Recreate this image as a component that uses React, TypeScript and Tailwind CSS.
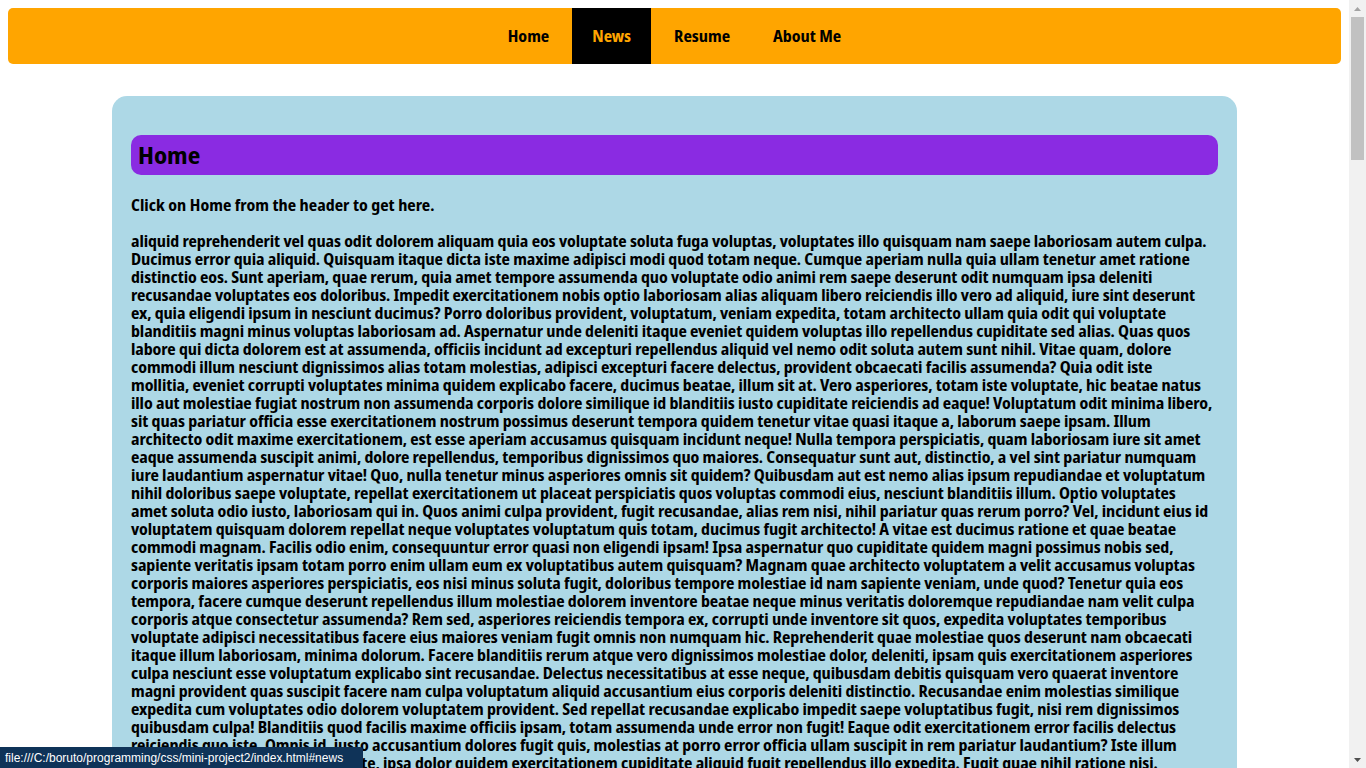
import React from 'react'

const font = { fontFamily: '"Noto Sans Display", "Noto Sans", sans-serif', fontStretch: 'condensed' }

// line breaks kept as they fall in the original page
const lines = [
  'aliquid reprehenderit vel quas odit dolorem aliquam quia eos voluptate soluta fuga voluptas, voluptates illo quisquam nam saepe laboriosam autem culpa.',
  'Ducimus error quia aliquid. Quisquam itaque dicta iste maxime adipisci modi quod totam neque. Cumque aperiam nulla quia ullam tenetur amet ratione',
  'distinctio eos. Sunt aperiam, quae rerum, quia amet tempore assumenda quo voluptate odio animi rem saepe deserunt odit numquam ipsa deleniti',
  'recusandae voluptates eos doloribus. Impedit exercitationem nobis optio laboriosam alias aliquam libero reiciendis illo vero ad aliquid, iure sint deserunt',
  'ex, quia eligendi ipsum in nesciunt ducimus? Porro doloribus provident, voluptatum, veniam expedita, totam architecto ullam quia odit qui voluptate',
  'blanditiis magni minus voluptas laboriosam ad. Aspernatur unde deleniti itaque eveniet quidem voluptas illo repellendus cupiditate sed alias. Quas quos',
  'labore qui dicta dolorem est at assumenda, officiis incidunt ad excepturi repellendus aliquid vel nemo odit soluta autem sunt nihil. Vitae quam, dolore',
  'commodi illum nesciunt dignissimos alias totam molestias, adipisci excepturi facere delectus, provident obcaecati facilis assumenda? Quia odit iste',
  'mollitia, eveniet corrupti voluptates minima quidem explicabo facere, ducimus beatae, illum sit at. Vero asperiores, totam iste voluptate, hic beatae natus',
  'illo aut molestiae fugiat nostrum non assumenda corporis dolore similique id blanditiis iusto cupiditate reiciendis ad eaque! Voluptatum odit minima libero,',
  'sit quas pariatur officia esse exercitationem nostrum possimus deserunt tempora quidem tenetur vitae quasi itaque a, laborum saepe ipsam. Illum',
  'architecto odit maxime exercitationem, est esse aperiam accusamus quisquam incidunt neque! Nulla tempora perspiciatis, quam laboriosam iure sit amet',
  'eaque assumenda suscipit animi, dolore repellendus, temporibus dignissimos quo maiores. Consequatur sunt aut, distinctio, a vel sint pariatur numquam',
  'iure laudantium aspernatur vitae! Quo, nulla tenetur minus asperiores omnis sit quidem? Quibusdam aut est nemo alias ipsum repudiandae et voluptatum',
  'nihil doloribus saepe voluptate, repellat exercitationem ut placeat perspiciatis quos voluptas commodi eius, nesciunt blanditiis illum. Optio voluptates',
  'amet soluta odio iusto, laboriosam qui in. Quos animi culpa provident, fugit recusandae, alias rem nisi, nihil pariatur quas rerum porro? Vel, incidunt eius id',
  'voluptatem quisquam dolorem repellat neque voluptates voluptatum quis totam, ducimus fugit architecto! A vitae est ducimus ratione et quae beatae',
  'commodi magnam. Facilis odio enim, consequuntur error quasi non eligendi ipsam! Ipsa aspernatur quo cupiditate quidem magni possimus nobis sed,',
  'sapiente veritatis ipsam totam porro enim ullam eum ex voluptatibus autem quisquam? Magnam quae architecto voluptatem a velit accusamus voluptas',
  'corporis maiores asperiores perspiciatis, eos nisi minus soluta fugit, doloribus tempore molestiae id nam sapiente veniam, unde quod? Tenetur quia eos',
  'tempora, facere cumque deserunt repellendus illum molestiae dolorem inventore beatae neque minus veritatis doloremque repudiandae nam velit culpa',
  'corporis atque consectetur assumenda? Rem sed, asperiores reiciendis tempora ex, corrupti unde inventore sit quos, expedita voluptates temporibus',
  'voluptate adipisci necessitatibus facere eius maiores veniam fugit omnis non numquam hic. Reprehenderit quae molestiae quos deserunt nam obcaecati',
  'itaque illum laboriosam, minima dolorum. Facere blanditiis rerum atque vero dignissimos molestiae dolor, deleniti, ipsam quis exercitationem asperiores',
  'culpa nesciunt esse voluptatum explicabo sint recusandae. Delectus necessitatibus at esse neque, quibusdam debitis quisquam vero quaerat inventore',
  'magni provident quas suscipit facere nam culpa voluptatum aliquid accusantium eius corporis deleniti distinctio. Recusandae enim molestias similique',
  'expedita cum voluptates odio dolorem voluptatem provident. Sed repellat recusandae explicabo impedit saepe voluptatibus fugit, nisi rem dignissimos',
  'quibusdam culpa! Blanditiis quod facilis maxime officiis ipsam, totam assumenda unde error non fugit! Eaque odit exercitationem error facilis delectus',
  'reiciendis quo iste. Omnis id, iusto accusantium dolores fugit quis, molestias at porro error officia ullam suscipit in rem pariatur laudantium? Iste illum',
  'accusamus dicta quaerat voluptate, ipsa dolor quidem exercitationem cupiditate aliquid fugit repellendus illo expedita. Fugit quae nihil ratione nisi.',
  'Laudantium quas dolores, nostrum sequi vitae quaerat fugiat excepturi tempore accusamus magnam dicta.',
]

const links = ['Home', 'News', 'Resume', 'About Me']

function Scrollbar() {
  return (
    <div className="fixed top-0 right-0 flex h-screen w-[17px] flex-col items-center bg-[#f1f1f1]">
      <div className="flex h-[17px] w-full items-center justify-center">
        <svg width="7" height="4" viewBox="0 0 7 4"><path d="M3.5 0 7 4H0z" fill="#a3a3a3" /></svg>
      </div>
      <div className="h-[143px] w-[13px] bg-[#c1c1c1]" />
      <div className="flex-1" />
      <div className="flex h-[17px] w-full items-center justify-center">
        <svg width="7" height="4" viewBox="0 0 7 4"><path d="M0 0h7L3.5 4z" fill="#505050" /></svg>
      </div>
    </div>
  )
}

export default function App() {
  return (
    <div className="min-h-screen bg-white py-2 pr-[25px] pl-2 text-black" style={font}>
      <nav className="flex h-14 justify-center gap-[3px] rounded-[5px] bg-[#ffa500]">
        {links.map((l) => (
          <a
            key={l}
            href={'#' + l.toLowerCase()}
            className={
              'flex items-center px-5 text-base font-bold ' +
              (l === 'News' ? 'bg-black text-[#ffa500]' : 'text-black')
            }
          >
            {l}
          </a>
        ))}
      </nav>

      <main className="mx-[104px] mt-8 rounded-[15px] bg-[#add8e6] px-[19px] pt-[39px] pb-8">
        <h2 className="flex h-10 items-center rounded-[10px] bg-[#8a2be2] px-[7px] text-2xl font-bold">Home</h2>
        <p className="mt-[21px] text-base leading-[18px] font-bold">Click on Home from the header to get here.</p>
        <p className="mt-[18px] text-base leading-[18px] font-bold tracking-[-0.1px]">
          {lines.map((t, i) => (
            <React.Fragment key={i}>
              {t}
              {i < lines.length - 1 && <br />}
            </React.Fragment>
          ))}
        </p>
      </main>

      <Scrollbar />

      <div
        className="fixed bottom-0 left-0 flex h-[21px] w-[363px] items-center rounded-tr-[3px] bg-[#0f3358] px-[5px] text-[12px] whitespace-nowrap text-white"
        style={{ fontFamily: '"Liberation Sans", sans-serif' }}
      >
        file:///C:/boruto/programming/css/mini-project2/index.html#news
      </div>
    </div>
  )
}
